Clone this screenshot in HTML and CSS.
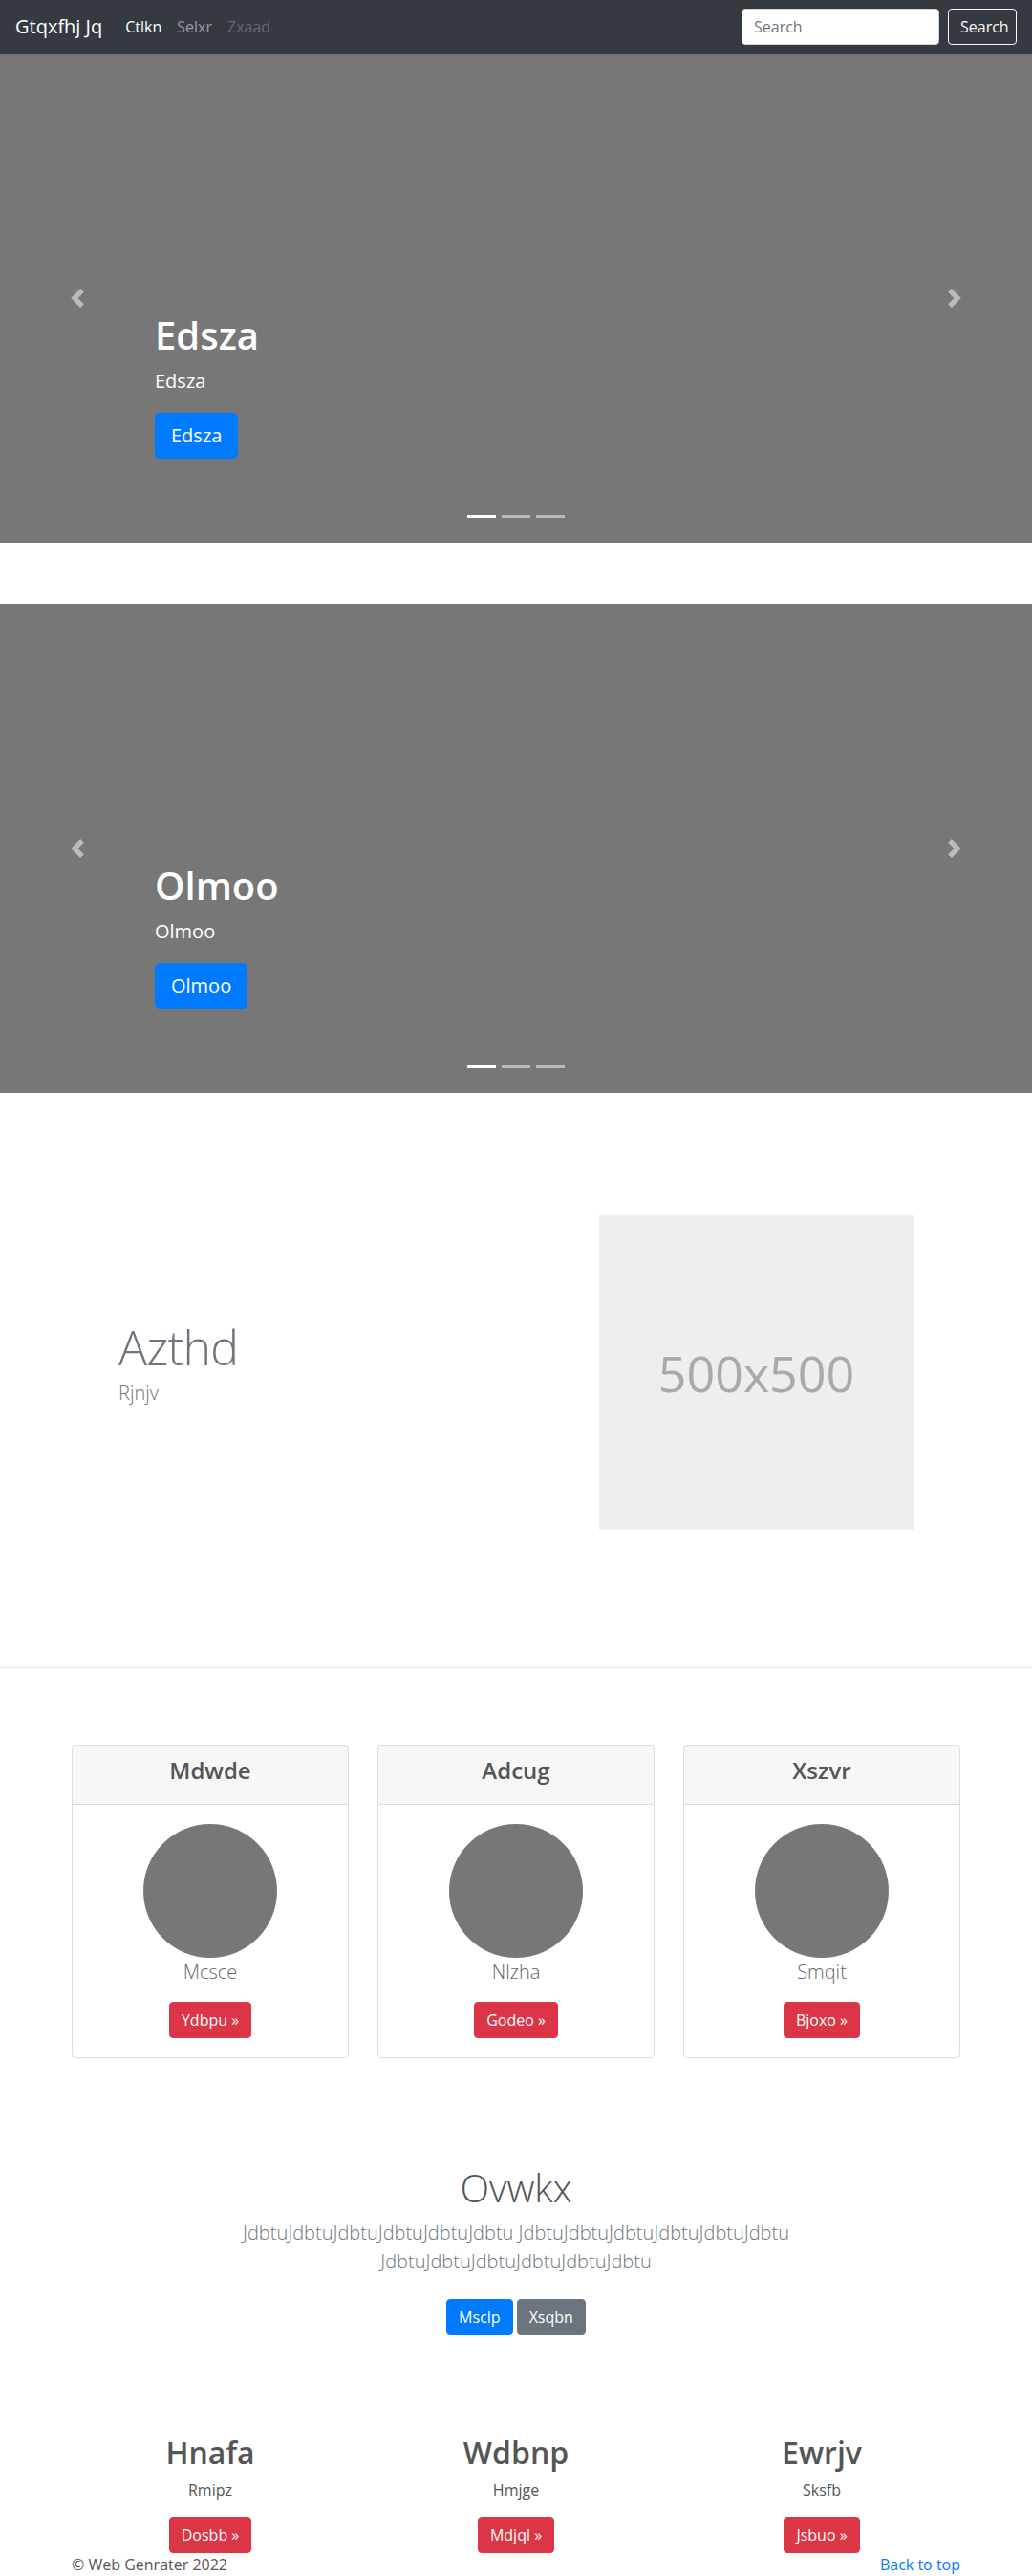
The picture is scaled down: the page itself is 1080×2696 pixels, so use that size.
FILE: index.html
```html
<!DOCTYPE html>
<html lang="en">
<head>
<meta charset="utf-8">
<title>Web Genrater</title>
<link rel="stylesheet" href="styles.css">
</head>
<body>
<header class="navbar">
  <a class="brand" href="#">Gtqxfhj Jq</a>
  <ul class="nav">
    <li><a class="nav-link active" href="#">Ctlkn</a></li>
    <li><a class="nav-link" href="#">Selxr</a></li>
    <li><a class="nav-link disabled" href="#">Zxaad</a></li>
  </ul>
  <form class="search">
    <input class="search-input" type="text" placeholder="Search">
    <button class="search-btn" type="button">Search</button>
  </form>
</header>

<section class="carousel carousel-first">
  <div class="caption">
    <h1 class="caption-title">Edsza</h1>
    <p class="caption-text">Edsza</p>
    <a class="btn btn-lg btn-primary" href="#">Edsza</a>
  </div>
  <ol class="indicators">
    <li class="indicator active"></li>
    <li class="indicator"></li>
    <li class="indicator"></li>
  </ol>
  <a class="control control-prev" href="#"><svg width="20" height="20" viewBox="0 0 8 8"><path fill="#fff" d="M5.25 0l-4 4 4 4 1.5-1.5L4.25 4l2.5-2.5L5.25 0z"/></svg></a>
  <a class="control control-next" href="#"><svg width="20" height="20" viewBox="0 0 8 8"><path fill="#fff" d="M2.75 0l-1.5 1.5L3.75 4l-2.5 2.5L2.75 8l4-4-4-4z"/></svg></a>
</section>

<section class="carousel">
  <div class="caption">
    <h1 class="caption-title">Olmoo</h1>
    <p class="caption-text">Olmoo</p>
    <a class="btn btn-lg btn-primary" href="#">Olmoo</a>
  </div>
  <ol class="indicators">
    <li class="indicator active"></li>
    <li class="indicator"></li>
    <li class="indicator"></li>
  </ol>
  <a class="control control-prev" href="#"><svg width="20" height="20" viewBox="0 0 8 8"><path fill="#fff" d="M5.25 0l-4 4 4 4 1.5-1.5L4.25 4l2.5-2.5L5.25 0z"/></svg></a>
  <a class="control control-next" href="#"><svg width="20" height="20" viewBox="0 0 8 8"><path fill="#fff" d="M2.75 0l-1.5 1.5L3.75 4l-2.5 2.5L2.75 8l4-4-4-4z"/></svg></a>
</section>

<section class="featurette">
  <div class="feat-text">
    <h2 class="feat-heading">Azthd</h2>
    <p class="lead muted">Rjnjv</p>
  </div>
  <div class="feat-img">500x500</div>
</section>

<hr class="divider">

<section class="cards">
  <div class="card">
    <div class="card-header"><h4 class="card-title">Mdwde</h4></div>
    <div class="card-body">
      <div class="avatar"></div>
      <p class="lead card-lead">Mcsce</p>
      <a class="btn btn-danger" href="#">Ydbpu &raquo;</a>
    </div>
  </div>
  <div class="card">
    <div class="card-header"><h4 class="card-title">Adcug</h4></div>
    <div class="card-body">
      <div class="avatar"></div>
      <p class="lead card-lead">Nlzha</p>
      <a class="btn btn-danger" href="#">Godeo &raquo;</a>
    </div>
  </div>
  <div class="card">
    <div class="card-header"><h4 class="card-title">Xszvr</h4></div>
    <div class="card-body">
      <div class="avatar"></div>
      <p class="lead card-lead">Smqit</p>
      <a class="btn btn-danger" href="#">Bjoxo &raquo;</a>
    </div>
  </div>
</section>

<section class="jumbo">
  <h1 class="jumbo-title">Ovwkx</h1>
  <p class="lead muted jumbo-text">JdbtuJdbtuJdbtuJdbtuJdbtuJdbtu JdbtuJdbtuJdbtuJdbtuJdbtuJdbtu JdbtuJdbtuJdbtuJdbtuJdbtuJdbtu</p>
  <div class="jumbo-actions">
    <a class="btn btn-primary" href="#">Msclp</a>
    <a class="btn btn-secondary" href="#">Xsqbn</a>
  </div>
</section>

<section class="features">
  <div class="feature">
    <h2 class="feature-title">Hnafa</h2>
    <p class="feature-text">Rmipz</p>
    <div class="feature-action"><a class="btn btn-danger" href="#">Dosbb &raquo;</a></div>
  </div>
  <div class="feature">
    <h2 class="feature-title">Wdbnp</h2>
    <p class="feature-text">Hmjge</p>
    <div class="feature-action"><a class="btn btn-danger" href="#">Mdjql &raquo;</a></div>
  </div>
  <div class="feature">
    <h2 class="feature-title">Ewrjv</h2>
    <p class="feature-text">Sksfb</p>
    <div class="feature-action"><a class="btn btn-danger" href="#">Jsbuo &raquo;</a></div>
  </div>
</section>

<footer class="footer">
  <p class="footer-copy">&copy; Web Genrater 2022</p>
  <p class="footer-top"><a href="#">Back to top</a></p>
</footer>
</body>
</html>
```
FILE: styles.css
```css
* { box-sizing: border-box; }

body {
  margin: 0;
  font-family: "Open Sans", "Noto Sans", "Liberation Sans", sans-serif;
  font-size: 16px;
  line-height: 1.5;
  color: #555;
  background: #fff;
}

a { text-decoration: none; }

/* Navbar */
.navbar {
  display: flex;
  align-items: center;
  height: 56px;
  padding: 0 16px;
  background: #343a40;
}
.brand {
  font-size: 20px;
  line-height: 30px;
  color: #fff;
  margin-right: 16px;
}
.nav {
  display: flex;
  list-style: none;
  margin: 0 auto 0 0;
  padding: 0;
}
.nav-link {
  display: block;
  padding: 8px;
  color: rgba(255,255,255,.5);
  font-size: 16px;
}
.nav-link.active { color: #fff; }
.nav-link.disabled { color: rgba(255,255,255,.25); }

.search { display: flex; align-items: center; }
.search-input {
  width: 207px;
  height: 38px;
  padding: 6px 12px;
  font: inherit;
  font-size: 16px;
  color: #495057;
  background: #fff;
  border: 1px solid #ced4da;
  border-radius: 4px;
  margin-right: 9px;
}
.search-input::placeholder { color: #6c757d; }
.search-btn {
  height: 38px;
  padding: 6px 12px;
  font: inherit;
  font-size: 16px;
  line-height: 24px;
  color: #f8f9fa;
  background: transparent;
  border: 1px solid #f8f9fa;
  border-radius: 4px;
  width: 72px;
}

/* Carousel */
.carousel {
  position: relative;
  height: 512px;
  background: #777;
  display: flex;
  flex-direction: column;
  justify-content: flex-end;
  padding: 0 162px 88px;
}
.carousel-first { margin-bottom: 64px; }
.caption {
  display: flex;
  flex-direction: column;
  align-items: flex-start;
  color: #fff;
}
.caption-title {
  margin: 0 0 9px;
  font-size: 40px;
  font-weight: 600;
  line-height: 48px;
}
.caption-text {
  margin: 0 0 18px;
  font-size: 20px;
  line-height: 30px;
}
.indicators {
  position: absolute;
  left: 0;
  right: 0;
  bottom: 26px;
  display: flex;
  justify-content: center;
  gap: 6px;
  margin: 0;
  padding: 0;
  list-style: none;
}
.indicator {
  width: 30px;
  height: 3px;
  background: rgba(255,255,255,.5);
}
.indicator.active { background: #fff; }
.control {
  position: absolute;
  top: 0;
  bottom: 0;
  width: 162px;
  display: flex;
  align-items: center;
  justify-content: center;
  opacity: .5;
}
.control-prev { left: 0; }
.control-next { right: 0; }

/* Buttons */
.btn {
  display: inline-block;
  padding: 6px 12px;
  font-size: 16px;
  line-height: 24px;
  border: 1px solid transparent;
  border-radius: 4px;
  color: #fff;
  text-align: center;
}
.btn-lg {
  padding: 8px 16px;
  font-size: 20px;
  line-height: 30px;
  border-radius: 5px;
}
.btn-primary { background: #007bff; border-color: #007bff; }
.btn-secondary { background: #6c757d; border-color: #6c757d; }
.btn-danger { background: #dc3545; border-color: #dc3545; }

.lead {
  font-size: 20px;
  font-weight: 300;
  line-height: 30px;
}
.muted { color: #6c757d; }

/* Featurette */
.featurette {
  display: flex;
  align-items: center;
  justify-content: space-between;
  padding: 128px 124px 144px;
}
.feat-heading {
  margin: 0 0 8px;
  font-size: 50px;
  font-weight: 300;
  line-height: 1;
  letter-spacing: -0.8px;
  color: #6c757d;
}
.feat-text .lead { margin: 0 0 16px; }
.feat-img {
  width: 329px;
  height: 329px;
  background: #eee;
  color: #aaa;
  font-size: 52px;
  display: flex;
  align-items: center;
  justify-content: center;
}

.divider {
  margin: 0;
  border: 0;
  border-top: 1px solid rgba(0,0,0,.1);
}

/* Cards */
.cards {
  width: 930px;
  margin: 80px auto 0;
  display: grid;
  grid-template-columns: repeat(3, 290px);
  gap: 30px;
}
.card {
  border: 1px solid rgba(0,0,0,.125);
  border-radius: 4px;
  overflow: hidden;
}
.card-header {
  padding: 12px 20px;
  background: rgba(0,0,0,.03);
  border-bottom: 1px solid rgba(0,0,0,.125);
  text-align: center;
}
.card-title {
  margin: 0 0 8px;
  font-size: 24px;
  font-weight: 600;
  line-height: 28.8px;
}
.card-body {
  padding: 20px;
  text-align: center;
}
.avatar {
  width: 140px;
  height: 140px;
  margin: 0 auto;
  border-radius: 50%;
  background: #777;
}
.card-lead {
  margin: 0 0 16px;
  color: #666;
}

/* Jumbotron */
.jumbo {
  padding: 112px 0 0;
  text-align: center;
}
.jumbo-title {
  margin: 0 0 8px;
  font-size: 40px;
  font-weight: 300;
  line-height: 48px;
}
.jumbo-text {
  max-width: 610px;
  margin: 0 auto 24px;
}
.jumbo-actions {
  display: flex;
  justify-content: center;
  gap: 4px;
}

/* Features */
.features {
  width: 960px;
  margin: 104px auto 0;
  display: grid;
  grid-template-columns: repeat(3, 1fr);
  text-align: center;
}
.feature-title {
  margin: 0 0 8px;
  font-size: 32px;
  font-weight: 600;
  line-height: 38.4px;
}
.feature-text { margin: 0 0 16px; }
.feature-action { display: flex; justify-content: center; }

/* Footer */
.footer {
  width: 930px;
  margin: 0 auto;
  display: flex;
  justify-content: space-between;
}
.footer p { margin: 0; }
.footer-top a { color: #007bff; }
```
